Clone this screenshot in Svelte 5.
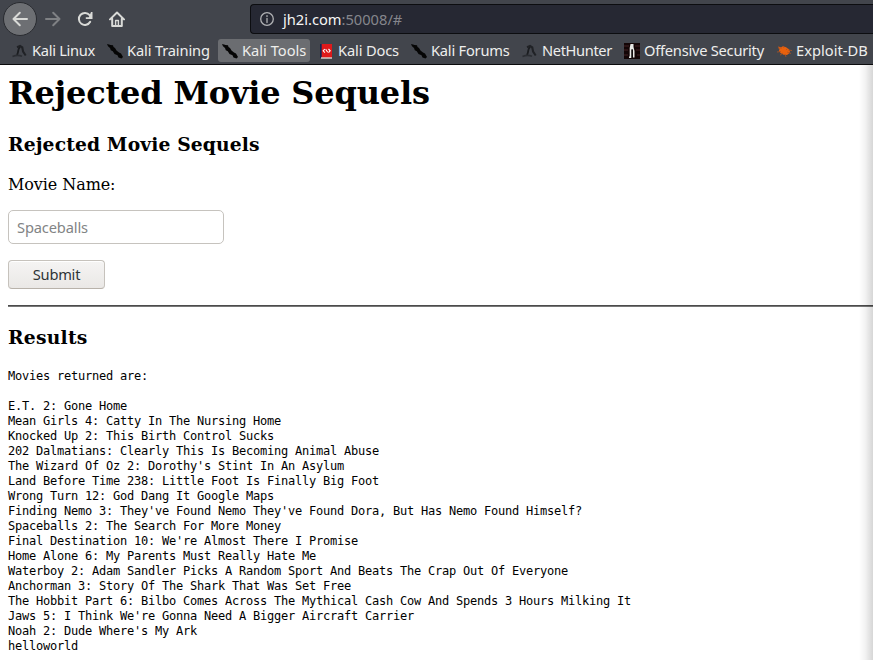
<script>
  const bookmarks = [
    { label: 'Kali Linux', icon: 'dragon', width: 63, spacing: -0.3 },
    { label: 'Kali Training', icon: 'knife', width: 83, spacing: -0.15 },
    { label: 'Kali Tools', icon: 'knife', width: 64, active: true, spacing: 0 },
    { label: 'Kali Docs', icon: 'book', width: 61, spacing: -0.15 },
    { label: 'Kali Forums', icon: 'knife', width: 79, spacing: -0.22 },
    { label: 'NetHunter', icon: 'dragon', width: 70, spacing: -0.38 },
    { label: 'Offensive Security', icon: 'offsec', width: 120, spacing: -0.24 },
    { label: 'Exploit-DB', icon: 'bug', width: 73, spacing: 0.02 }
  ];
  const movies = [
    'E.T. 2: Gone Home',
    'Mean Girls 4: Catty In The Nursing Home',
    'Knocked Up 2: This Birth Control Sucks',
    '202 Dalmatians: Clearly This Is Becoming Animal Abuse',
    "The Wizard Of Oz 2: Dorothy's Stint In An Asylum",
    'Land Before Time 238: Little Foot Is Finally Big Foot',
    'Wrong Turn 12: God Dang It Google Maps',
    "Finding Nemo 3: They've Found Nemo They've Found Dora, But Has Nemo Found Himself?",
    'Spaceballs 2: The Search For More Money',
    "Final Destination 10: We're Almost There I Promise",
    'Home Alone 6: My Parents Must Really Hate Me',
    'Waterboy 2: Adam Sandler Picks A Random Sport And Beats The Crap Out Of Everyone',
    'Anchorman 3: Story Of The Shark That Was Set Free',
    'The Hobbit Part 6: Bilbo Comes Across The Mythical Cash Cow And Spends 3 Hours Milking It',
    "Jaws 5: I Think We're Gonna Need A Bigger Aircraft Carrier",
    "Noah 2: Dude Where's My Ark",
    'helloworld'
  ];
  const output = 'Movies returned are:\n\n' + movies.join('\n');
</script>

<div class="window">
  <header>
    <div class="toolbar">
      <span class="back">
        <svg width="16" height="16" viewBox="0 0 16 16"><path d="M15 8H1.5M7.8 1.8L1.5 8l6.3 6.2" /></svg>
      </span>
      <svg class="forward" width="16" height="16" viewBox="0 0 16 16"><path d="M1 8h13.5M8.2 1.8L14.5 8l-6.3 6.2" /></svg>
      <svg class="reload" width="16" height="16" viewBox="0 0 16 16"><path d="M13.2 10.8A6 6 0 1 1 12.6 4.2" /><path class="solid" d="M15.5 1v7H8.8V6.3h3L14 1z" /></svg>
      <svg class="home" width="16" height="16" viewBox="0 0 16 16"><path d="M1 8.4L8 1.5l7 6.9M3.2 7.7V14.9h9.6V7.7" /><path class="door" d="M6.6 14V9.5h2.8V14" /></svg>
      <div class="address">
        <svg width="14" height="14" viewBox="0 0 14 14"><circle cx="7" cy="7" r="6.3" /><path d="M7 6.3v4.2M7 3.6v.8" /></svg>
        <span class="url"><b>jh2i.com</b>:50008/#</span>
      </div>
    </div>
    <nav>
      {#each bookmarks as item}
        <a class:active={item.active} href="#top">
          <svg width="16" height="16" viewBox="0 0 16 16">
            {#if item.icon === 'dragon'}
              <path d="M5 4.2L8 3l2.3 1.5.8 4.2 2.6 3.8" fill="none" stroke="#202226" stroke-width="2.1" />
              <path d="M8 4.2C5.5 5.5 7 8.5 5 12" fill="none" stroke="#1b1d20" stroke-width="1.8" />
              <path d="M.5 13.6C4 12 7 12 10 13.2" fill="none" stroke="#2b2e33" stroke-width="1.6" />
            {:else if item.icon === 'knife'}
              <path d="M0 1l2 .5L3.5 2l2.5.3L6.5 4 8 5l1.5 2.5L12 9.5l2 1 2 3.5-1.5 1.5-3-1-1-2.3L7.5 11 5.8 8.3 3.8 7.2 3 5 1 3.3z" fill="#050505" />
            {:else if item.icon === 'book'}
              <path d="M2 1h12v14H2z" fill="#df191b" />
              <path d="M2 1h1.7v14H2z" fill="#172451" />
              <path d="M3 14.3h11v1.4H3z" fill="#ddd4d1" />
              <path d="M6.8 6L5.2 7.8l1.7 1.8M10.5 6l1.7 1.8-1.7 1.8M7.7 6.3l2 3" fill="none" stroke="#fff" stroke-width="1.1" />
            {:else if item.icon === 'offsec'}
              <path d="M0 0h16v16H0z" fill="#130506" />
              <path d="M0 3h5m6 0h5M0 7h4m8 0h4M0 12h4m9 0h3" stroke="#35191b" stroke-width="1.3" />
              <path d="M6.5 1h3v3l1 4v6.5H9V7H7.5v8H5v-1.5h.7V5z" fill="#e8e8e5" />
              <path d="M8.1 6v9" stroke="#151314" stroke-width="1.2" />
            {:else}
              <path d="M2 3.5l3 .7 2-1 3 1 3 2 1 2.2-1 2-2 1.6-3.5-.2-3-1.8L3 7.8 3.5 6z" fill="#e9610d" />
              <path d="M1 9l4-.5M2 5h4m1-2l1 2m4 0l-2 2m2 0l4 .5M11 9l4 1.5M9 11l1 3M7 10l-3 2.2" stroke="#b35320" stroke-width=".8" />
            {/if}
          </svg>
          <span style="width: {item.width}px; letter-spacing: {item.spacing}px">{item.label}</span>
        </a>
      {/each}
    </nav>
  </header>

  <main id="top">
    <h1>Rejected Movie Sequels</h1>
    <h3>Rejected Movie Sequels</h3>
    <p>Movie Name:</p>
    <input type="text" placeholder="Spaceballs" />
    <button type="button">Submit</button>
    <hr />
    <h3 class="results">Results</h3>
    <pre>{output}</pre>
  </main>
  <div class="edge"></div>
</div>

<style>
  :global(body) { margin: 0; overflow: hidden; background: #fff; }
  .window { position: relative; width: 873px; height: 660px; overflow: hidden; display: flex; flex-direction: column; background: #fff; }
  header { box-sizing: border-box; height: 65px; flex: none; background: #42454c; border-bottom: 1px solid #0b0b0d; font-family: "Noto Sans", sans-serif; color: #eeeeec; }
  svg { display: block; flex: none; }
  .toolbar { display: flex; align-items: center; height: 38px; padding-left: 3px; }
  .toolbar svg { fill: none; stroke: #d9dad7; stroke-width: 2; stroke-linecap: round; stroke-linejoin: round; }
  .back { box-sizing: border-box; width: 34px; height: 34px; flex: none; display: flex; align-items: center; justify-content: center; border-radius: 50%; background: #6d6f73; border: 1px solid #292b30; }
  .toolbar .forward { margin-left: 8px; stroke: #7f8184; }
  .toolbar .reload { margin-left: 16px; }
  .toolbar .home { margin-left: 16px; }
  .toolbar .solid { fill: #d9dad7; stroke: none; }
  .toolbar .door { stroke-width: 1.4; }
  .address { box-sizing: border-box; height: 30px; flex: 1; margin-left: 125px; display: flex; align-items: center; padding-left: 9px; background: #262833; border: 1px solid #0c0d10; border-right: 0; border-radius: 4px 0 0 4px; }
  .address svg { stroke: #b0b1b4; stroke-width: 1.3; }
  .url { margin-left: 9px; font-size: 14.67px; line-height: 20px; color: #85868c; white-space: nowrap; }
  .url b { font-weight: 400; color: #f5f5f5; }
  nav { display: flex; align-items: center; height: 25px; padding-left: 8px; gap: 4px; }
  nav a { box-sizing: border-box; height: 23px; display: flex; align-items: center; flex: none; padding: 0 4px; gap: 4px; border-radius: 3px; color: inherit; text-decoration: none; font-size: 14.67px; line-height: 20px; }
  nav a span { white-space: nowrap; padding-bottom: 2px; }
  nav .active { background: #6b6d71; }
  main { display: flex; flex-direction: column; align-items: flex-start; padding-left: 8px; color: #000; font-family: "DejaVu Serif", serif; }
  h1 { margin: 9px 0 0; font-size: 32px; line-height: 38px; letter-spacing: -.18px; }
  h3 { margin: 21px 0 0; font-size: 18.72px; line-height: 22px; letter-spacing: .13px; }
  p { margin: 20px 0 0; font-size: 16px; line-height: 19px; letter-spacing: -.08px; }
  input { box-sizing: border-box; width: 216px; height: 34px; margin: 16px 0 0; padding: 0 8px; border: 1px solid #c6c3be; border-radius: 5px; background: #fff; font: 14.67px "Noto Sans", sans-serif; letter-spacing: -.15px; }
  input::placeholder { color: #828485; opacity: 1; }
  button { box-sizing: border-box; width: 97px; height: 29px; margin: 16px 0 0; padding: 0 0 2px; border: 1px solid #c6c2bc; border-bottom-color: #b8b2aa; border-radius: 4px; background: linear-gradient(#f5f4f3, #eae8e6); box-shadow: inset 0 1px #fff; color: #2e3436; font: 14.67px "Noto Sans", sans-serif; letter-spacing: -.25px; }
  hr { box-sizing: border-box; align-self: stretch; height: 2px; margin: 16px 0 0; border: 0; border-top: 1px solid #4b4b4b; border-bottom: 1px solid #777; }
  .results { margin-top: 19px; letter-spacing: .25px; }
  pre { margin: 21px 0 0; font: 12px/15px "DejaVu Sans Mono", monospace; letter-spacing: -.224px; }
  .edge { position: absolute; top: 65px; right: 0; bottom: 0; width: 14px; background: linear-gradient(to right, transparent, rgba(0,0,0,.05) 45%, rgba(0,0,0,.16)); pointer-events: none; }
</style>
